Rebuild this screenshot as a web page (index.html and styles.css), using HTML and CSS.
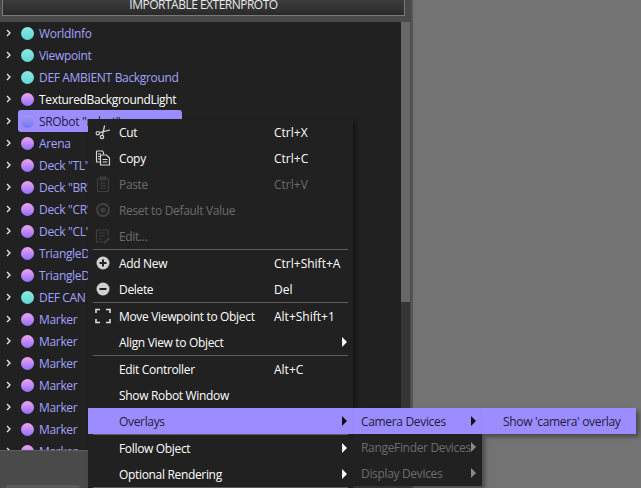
FILE: index.html
```html
<!DOCTYPE html>
<html lang="en">
<head>
    <meta charset="UTF-8">
    <title>Scene Tree</title>
    <link rel="stylesheet" href="styles.css">
</head>
<body>
    <div class="page">
        <div class="side">
            <div class="topbtn">IMPORTABLE EXTERNPROTO</div>
            <div class="middle">
                <div class="tree" id="tree"></div>
                <div class="scroll"><div class="handle"></div></div>
            </div>
            <div class="bottom"><div class="bottombtn"></div></div>
        </div>
        <div class="splitter"></div>
        <div class="view"></div>
    </div>

    <div class="menu main">
        <div class="item"><svg class="ico" viewBox="0 0 16 16"><g fill="none" stroke="#d8d8d8" stroke-width="1.2"><circle cx="2.8" cy="9.2" r="1.7"/><circle cx="7" cy="13" r="1.7"/><path d="M4.3 8.6 15 6M7.4 11.3 9.6 1.5"/></g></svg><span class="label">Cut</span><span class="key">Ctrl+X</span></div>
        <div class="item"><svg class="ico" viewBox="0 0 16 16"><g fill="none" stroke="#d8d8d8" stroke-width="1.1"><path d="M1.5 1h6l1 1.5v2M1.5 1v11h3.5"/><path d="M5.5 5h6l3 3v7h-9z"/><path d="M3 4h3M3 6.5h2M3 9h2M7.5 9.500h5M7.5 12h5"/></g></svg><span class="label">Copy</span><span class="key">Ctrl+C</span></div>
        <div class="item off"><svg class="ico" viewBox="0 0 16 16"><g fill="none" stroke="#3e3e3e" stroke-width="1.2"><rect x="2.5" y="2.5" width="11" height="13" rx="1"/><rect x="5.5" y="1" width="5" height="3"/><path d="M5 7h6M5 9.500h6M5 12h6"/></g></svg><span class="label">Paste</span><span class="key">Ctrl+V</span></div>
        <div class="item off"><svg class="ico" viewBox="0 0 16 16"><circle cx="8" cy="8" r="6" fill="none" stroke="#3e3e3e" stroke-width="2.4"/><circle cx="8" cy="8" r="2.6" fill="#3e3e3e"/></svg><span class="label">Reset to Default Value</span></div>
        <div class="item off"><svg class="ico" viewBox="0 0 16 16"><g fill="none" stroke="#3e3e3e" stroke-width="1.2"><path d="M13 8V2H1.500v12H8"/><path d="M4 5h6M4 8h6M4 11h3"/><path d="M9 15l5.500-5" stroke-width="2"/></g></svg><span class="label">Edit...</span></div>
        <div class="sep"></div>
        <div class="item"><svg class="ico" viewBox="0 0 16 16"><circle cx="8" cy="8" r="6.500" fill="#d0d0d0"/><path d="M8 4.500v7M4.500 8h7" stroke="#212121" stroke-width="2"/></svg><span class="label">Add New</span><span class="key">Ctrl+Shift+A</span></div>
        <div class="item"><svg class="ico" viewBox="0 0 16 16"><circle cx="8" cy="8" r="6.500" fill="#d0d0d0"/><path d="M4.500 8h7" stroke="#212121" stroke-width="2"/></svg><span class="label">Delete</span><span class="key">Del</span></div>
        <div class="sep"></div>
        <div class="item"><svg class="ico" viewBox="0 0 16 16"><path d="M1 5V1.500h4M11 1.500h4V5M15 11v3.500h-4M5 14.500H1V11" fill="none" stroke="#e0e0e0" stroke-width="1.600"/></svg><span class="label">Move Viewpoint to Object</span><span class="key">Alt+Shift+1</span></div>
        <div class="item"><span class="ico"></span><span class="label">Align View to Object</span><span class="arrow"></span></div>
        <div class="sep"></div>
        <div class="item"><span class="ico"></span><span class="label">Edit Controller</span><span class="key">Alt+C</span></div>
        <div class="item"><span class="ico"></span><span class="label">Show Robot Window</span></div>
        <div class="item on"><span class="ico"></span><span class="label">Overlays</span><span class="arrow"></span></div>
        <div class="sep"></div>
        <div class="item"><span class="ico"></span><span class="label">Follow Object</span><span class="arrow"></span></div>
        <div class="item"><span class="ico"></span><span class="label">Optional Rendering</span><span class="arrow"></span></div>
        <div class="sep"></div>
    </div>

    <div class="menu sub">
        <div class="item on"><span class="label">Camera Devices</span><span class="arrow"></span></div>
        <div class="item off"><span class="label">RangeFinder Devices</span><span class="arrow"></span></div>
        <div class="item off"><span class="label">Display Devices</span><span class="arrow"></span></div>
    </div>

    <div class="menu subsub">
        <div class="item on"><span class="label">Show 'camera' overlay</span></div>
    </div>

    <script>
        const rows = [
            { name: "WorldInfo", kind: "base" },
            { name: "Viewpoint", kind: "base" },
            { name: "DEF AMBIENT Background", kind: "base" },
            { name: "TexturedBackgroundLight", kind: "proto", white: true },
            { name: 'SRObot "robot"', kind: "proto", selected: true },
            { name: "Arena", kind: "proto" },
            { name: 'Deck "TL"', kind: "proto" },
            { name: 'Deck "BR"', kind: "proto" },
            { name: 'Deck "CR"', kind: "proto" },
            { name: 'Deck "CL"', kind: "proto" },
            { name: "TriangleDeck", kind: "proto" },
            { name: "TriangleDeck", kind: "proto" },
            { name: "DEF CAN Solid", kind: "base" },
            { name: "Marker", kind: "proto" },
            { name: "Marker", kind: "proto" },
            { name: "Marker", kind: "proto" },
            { name: "Marker", kind: "proto" },
            { name: "Marker", kind: "proto" },
            { name: "Marker", kind: "proto" },
            { name: "Marker", kind: "proto" }
        ];

        const tree = document.getElementById("tree");
        rows.forEach(row => {
            const cls = "row" + (row.selected ? " selected" : "") + (row.white ? " white" : "");
            tree.innerHTML += `<div class="${cls}">
                <svg class="chev" viewBox="0 0 6 8"><path d="M1 1l3 3-3 3" fill="none" stroke="#e8e8e8" stroke-width="1.300"/></svg>
                <div class="pill"><span class="ball ${row.kind}"></span><span class="name">${row.name}</span></div>
            </div>`;
        });
    </script>
</body>
</html>
```

FILE: styles.css
```css
html, body {
    margin: 0;
    height: 100%;
    overflow: hidden;
}
body {
    font-family: "Open Sans", sans-serif;
    font-size: 12px;
    letter-spacing: -0.33px;
    background-color: #737373;
    position: relative;
}
.page {
    display: flex;
    height: 488px;
}
.side {
    width: 411px;
    display: flex;
    flex-direction: column;
    background-color: #4a4a4a;
}
.topbtn {
    height: 15px;
    line-height: 10px;
    margin: 0 6px 6px 2px;
    text-align: center;
    letter-spacing: -0.5px;
    color: #e8e8e8;
    background: linear-gradient(#3c3c3c, #2a2a2a);
    border: 1px solid #7a7a7a;
    border-top: none;
    flex: none;
}
.middle {
    height: 428px;
    display: flex;
    flex: none;
}
.tree {
    width: 401px;
    background-color: #212121;
    overflow: hidden;
}
.row {
    height: 22px;
    display: flex;
    align-items: center;
    color: #a3a3ff;
}
.row.white {
    color: #fff;
}
.chev {
    width: 6px;
    height: 8px;
    margin: 0 6px 0 6px;
    flex: none;
}
.pill {
    display: flex;
    align-items: center;
    height: 22px;
    width: 164px;
    padding-left: 3px;
    box-sizing: border-box;
    white-space: nowrap;
    border-radius: 3px;
}
.selected .pill {
    background-color: #9b8dff;
    color: #1c1c3c;
}
.ball {
    width: 13px;
    height: 13px;
    border-radius: 50%;
    margin-right: 5px;
    flex: none;
}
.ball.base {
    background: linear-gradient(#8fe8e0, #5cd8d8);
}
.ball.proto {
    background: linear-gradient(#f0a4ec, #8f70ff);
}
.selected .ball.proto {
    background: linear-gradient(#a898f0, #6f78f8);
}
.scroll {
    width: 9px;
    background-color: #353535;
}
.handle {
    height: 280px;
    background-color: #686868;
}
.bottom {
    flex: 1;
    border-top: 1px solid #5e5e5e;
    padding: 34px 0 0 6px;
}
.bottombtn {
    width: 74px;
    height: 10px;
    background-color: #5a5a5a;
    border-radius: 2px;
}
.splitter {
    width: 2px;
    background-color: #555;
}
.view {
    flex: 1;
}

/* popup menus */
.menu {
    position: absolute;
    background-color: #212121;
    color: #fff;
    box-shadow: 3px 3px 4px rgba(0, 0, 0, 0.35);
}
.main {
    left: 88px;
    top: 119px;
    width: 265px;
}
.sub {
    left: 353px;
    top: 408px;
    width: 129px;
}
.subsub {
    left: 482px;
    top: 408px;
    width: 154px;
}
.item {
    height: 26px;
    display: flex;
    align-items: center;
    padding-left: 5px;
    position: relative;
    white-space: nowrap;
}
.item.on {
    background-color: #9b8dff;
    color: #1c1c3c;
}
.item.off {
    color: #6c6c6c;
}
.ico {
    width: 16px;
    height: 16px;
    margin: 0 8px 0 2px;
    flex: none;
}
.label {
    width: 155px;
}
.key {
    flex: none;
    letter-spacing: 0;
}
.arrow {
    position: absolute;
    right: 6px;
    top: 8px;
    border-left: 5px solid #fff;
    border-top: 5px solid transparent;
    border-bottom: 5px solid transparent;
}
.item.on .arrow {
    border-left-color: #111;
}
.item.off .arrow {
    border-left-color: #8a8a8a;
}
.sep {
    height: 1px;
    margin: 0 5px;
    background-color: #5c5c5c;
}
.sub .item {
    padding-left: 8px;
}
.sub .label {
    width: auto;
}
.subsub .item {
    padding-left: 21px;
}
.subsub .label {
    width: auto;
}
```
